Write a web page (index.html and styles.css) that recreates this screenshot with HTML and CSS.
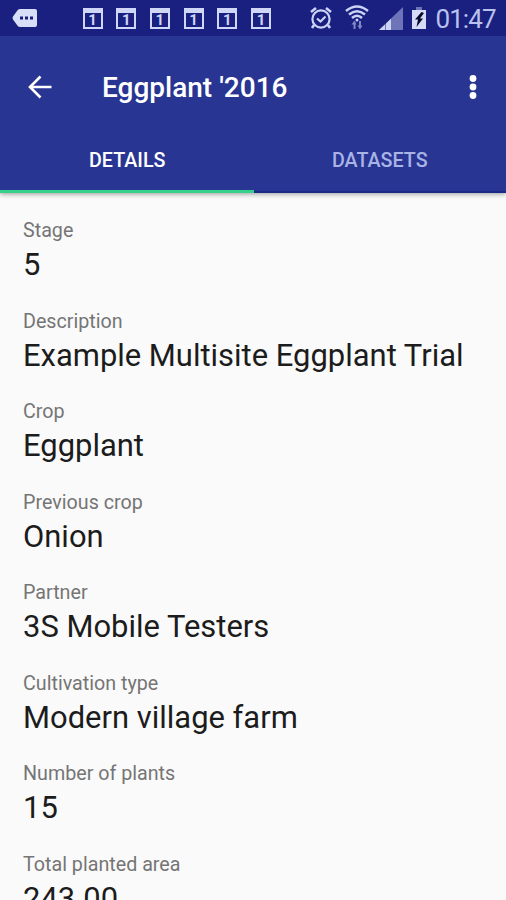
FILE: index.html
```html
<!DOCTYPE html>
<html lang="en">
<head>
<meta charset="utf-8">
<title>Eggplant '2016</title>
<link rel="stylesheet" href="styles.css">
</head>
<body>
<header class="header">
  <div class="status">
    <svg class="more" width="26" height="20" viewBox="0 0 26 20"><path fill="#d9def8" d="M8 1h15q2 0 2 2v14q0 2-2 2H8Q6 19 5 17L1 11.500Q0 10 1 8.500L5 3Q6 1 8 1z"/><path fill="#171d79" d="M8 8.500h3v3H8zM13 8.500h3v3h-3zM18 8.500h3v3h-3z"/></svg>
    <div class="calendars">
      <div class="calendar">1</div>
      <div class="calendar">1</div>
      <div class="calendar">1</div>
      <div class="calendar">1</div>
      <div class="calendar">1</div>
      <div class="calendar">1</div>
    </div>
    <svg class="alarm" width="24" height="24" viewBox="0 0 24 24" fill="none" stroke="#ccd3f4" stroke-width="2.200"><circle cx="12" cy="13" r="8.600"/><path d="M2 6l5-4M22 6l-5-4M5 19l-2 3M19 19l2 3" stroke-width="2.600"/><path d="M8 12.500l3.500 3 5-5"/></svg>
    <svg class="wifi" width="26" height="26" viewBox="0 0 26 26" fill="none" stroke="#ccd3f4" stroke-width="2.500"><path d="M2 7Q13-2 24 7M5 10.500Q13 4 21 10.500M8 14Q13 9.500 18 14"/><circle cx="13" cy="16" r="1.500" fill="#ccd3f4" stroke="none"/><path d="M10.500 25v-6M16 17v6" stroke="#8087c2" stroke-width="2"/><path d="M7.500 20.500l3-4 2 4zM13.500 21.500h5l-2.500 4z" fill="#8087c2" stroke="none"/></svg>
    <svg class="signal" width="24" height="23" viewBox="0 0 24 23"><path fill="#6d74b8" d="M24 0v23H0z"/><path fill="#ccd3f4" d="M0 23l6-5.500V23zM7 16.500l5-4.800V23H7z"/></svg>
    <svg class="battery" width="14" height="22" viewBox="0 0 14 22"><path fill="#6d74b8" d="M4 0h6v3H4z"/><path fill="#d5daf6" d="M0 3h14v19H0z"/><path fill="#090b28" d="M9.500 5L3 12.500h3L4.500 20 11 11.500H8L12 6z"/></svg>
    <span class="clock">01:47</span>
  </div>
  <div class="toolbar">
    <svg class="back" width="24" height="24" viewBox="0 0 24 24" fill="none" stroke="#fff" stroke-width="2.600"><path d="M23.500 12H2M12.500 1.500L2 12l10.500 10.500"/></svg>
    <h1 class="title">Eggplant '2016</h1>
    <svg class="menu" width="8" height="26" viewBox="0 0 8 26" fill="#fff"><circle cx="4" cy="4.500" r="3.400"/><circle cx="4" cy="13" r="3.400"/><circle cx="4" cy="21.500" r="3.400"/></svg>
  </div>
  <nav class="tabs">
    <div class="tab active">DETAILS</div>
    <div class="tab">DATASETS</div>
  </nav>
</header>
<main class="details">
  <div class="field"><div class="label">Stage</div><div class="value">5</div></div>
  <div class="field"><div class="label">Description</div><div class="value">Example Multisite Eggplant Trial</div></div>
  <div class="field"><div class="label">Crop</div><div class="value">Eggplant</div></div>
  <div class="field"><div class="label">Previous crop</div><div class="value">Onion</div></div>
  <div class="field"><div class="label">Partner</div><div class="value">3S Mobile Testers</div></div>
  <div class="field"><div class="label">Cultivation type</div><div class="value">Modern village farm</div></div>
  <div class="field"><div class="label">Number of plants</div><div class="value">15</div></div>
  <div class="field"><div class="label">Total planted area</div><div class="value">243.00</div></div>
</main>
</body>
</html>
```
FILE: styles.css
```css
* { box-sizing: border-box; }
body {
  margin: 0;
  height: 900px;
  overflow: hidden;
  display: flex;
  flex-direction: column;
  background: #fafafa;
  font-family: Roboto, sans-serif;
}
svg { display: block; flex: none; }
.header {
  flex: none;
  height: 193px;
  background: #283593;
  box-shadow: 0 1px 5px rgba(0, 0, 0, .4);
}
.status {
  height: 36px;
  display: flex;
  align-items: flex-start;
  background: #1a2080;
}
.more { margin: 8px 0 0 12px; }
.calendars { display: flex; gap: 13.700px; margin: 8px 0 0 44.500px; }
.calendar {
  width: 20px;
  height: 21px;
  border: 2px solid #d0d6f6;
  border-top-width: 5px;
  color: #d0d6f6;
  font-size: 15px;
  font-weight: 700;
  line-height: 14px;
  text-align: center;
}
.alarm { margin: 6px 0 0 38.500px; }
.wifi { margin: 4px 0 0 11px; }
.signal { margin: 7px 0 0 9px; }
.battery { margin: 7px 0 0 9px; }
.clock {
  margin-left: 9px;
  color: #b9c1ec;
  font-size: 26px;
  letter-spacing: -.9px;
  line-height: 39px;
}
.toolbar {
  height: 101px;
  display: flex;
  align-items: center;
  padding: 0 29px 0 28px;
}
.title {
  flex: 1;
  margin: 2px 0 0 50px;
  color: #fff;
  font-size: 28px;
  font-weight: 500;
}
.tabs { display: flex; height: 56px; }
.tab {
  flex: 1;
  padding-top: 12px;
  color: #a9b3e6;
  font-size: 19.700px;
  font-weight: 500;
  line-height: 24px;
  text-align: center;
  border-bottom: 2px solid #1c2787;
}
.tab.active { padding-left: 1px; color: #fff; border-bottom: 3px solid #35d08a; }
.details { padding: 26px 23px 0; }
.field { height: 90.500px; }
.label { color: #757575; font-size: 19.700px; line-height: 24px; }
.value {
  margin-top: 4.400px;
  color: #1c1c1c;
  font-size: 30.950px;
  line-height: 36px;
  white-space: nowrap;
}
```
